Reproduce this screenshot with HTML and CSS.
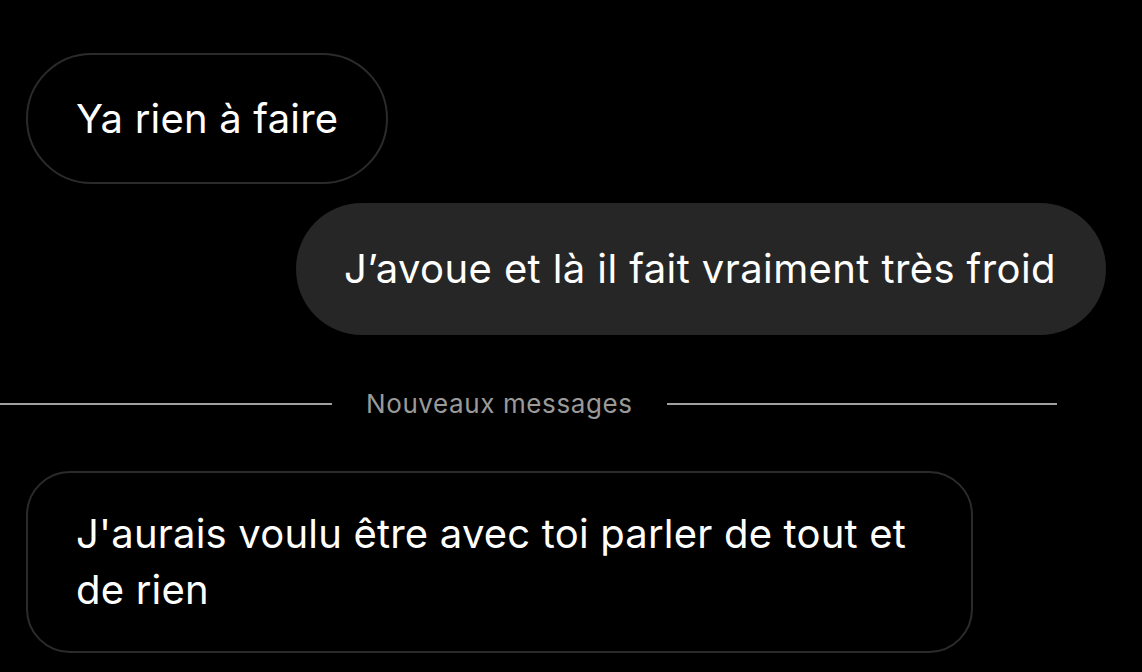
FILE: index.html
```html
<!DOCTYPE html>
<html lang="fr">

<head>
    <meta charset="UTF-8">
    <meta name="viewport" content="width=device-width, initial-scale=1.0">
    <title>Messages</title>
    <link rel="stylesheet" href="styles.css">
</head>

<body>
    <div class="thread">
        <div class="row received">
            <div class="bubble outline">Ya rien à faire</div>
        </div>
        <div class="row sent">
            <div class="bubble filled">J’avoue et là il fait vraiment très froid</div>
        </div>
        <div class="divider">
            <span class="line left"></span>
            <span class="divider-label">Nouveaux messages</span>
            <span class="line right"></span>
        </div>
        <div class="row received">
            <div class="bubble outline wide">J'aurais voulu être avec toi parler de tout et de rien</div>
        </div>
    </div>
</body>

</html>
```

FILE: styles.css
```css
body {
    margin: 0;
    background-color: #000;
    font-family: Inter, "Noto Sans", sans-serif;
    color: #fff;
}

.thread {
    display: flex;
    flex-direction: column;
    padding-top: 53px;
}

.row {
    display: flex;
}

.received {
    justify-content: flex-start;
    padding-left: 26px;
}

.sent {
    justify-content: flex-end;
    padding-right: 36px;
    margin-top: 19px;
}

.bubble {
    box-sizing: border-box;
    font-size: 40px;
    letter-spacing: 0.2px;
    line-height: 56px;
    padding: 35.5px 48px;
    border-radius: 66px;
}

.outline {
    border: 2px solid #2b2b2b;
}

.filled {
    background-color: #262626;
    letter-spacing: 0.4px;
    padding: 38px 50px 38px 48px;
}

.wide {
    width: 947px;
    border-radius: 44px;
    padding: 33px 48px;
}

.divider {
    display: flex;
    align-items: center;
    margin-top: 55px;
    margin-bottom: 53px;
    padding-right: 85px;
    gap: 34px;
}

.line {
    height: 2px;
    background-color: #a0a0a0;
}

.line.left {
    width: 332px;
}

.line.right {
    flex: 1;
}

.divider-label {
    font-size: 26px;
    letter-spacing: 0.6px;
    color: #9a9a9a;
    line-height: 28px;
}
```
